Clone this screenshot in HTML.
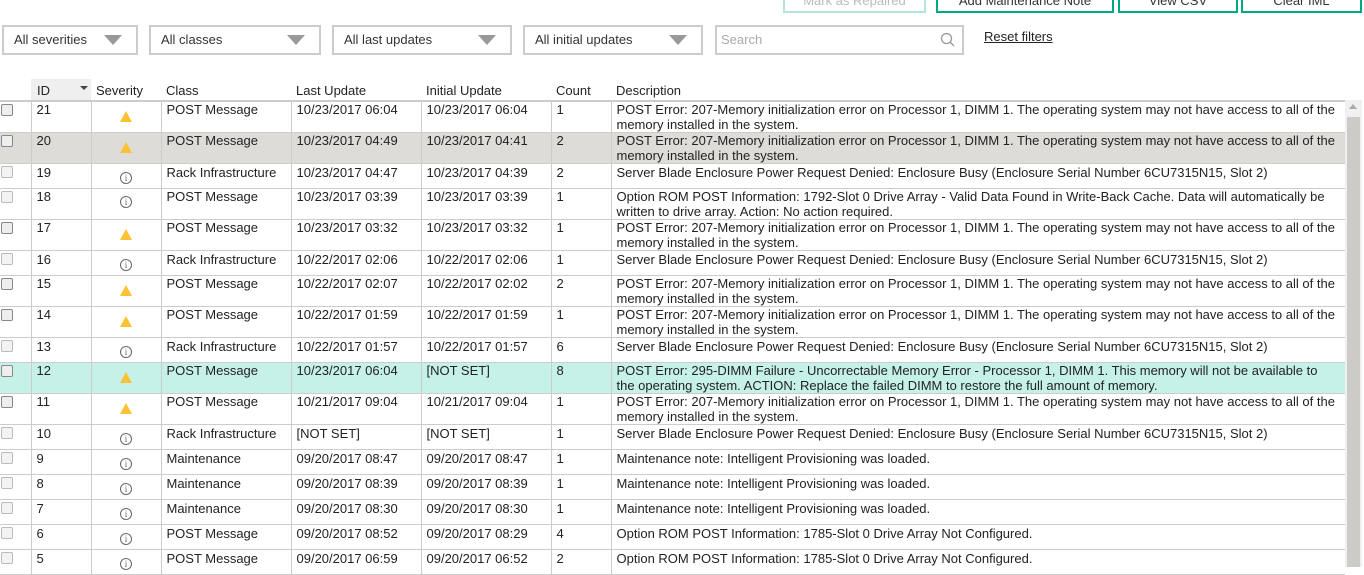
<!DOCTYPE html>
<html><head><meta charset="utf-8"><style>
*{box-sizing:border-box;margin:0;padding:0}
body{width:1364px;height:567px;overflow:hidden;background:#fff;font-family:"Liberation Sans",Arial,sans-serif;font-size:13px;color:#222;position:relative}
.btn{position:absolute;top:-20px;height:33px;border:2px solid #01a982;font-size:13px;text-align:center;line-height:38px;color:#333}
.sel{position:absolute;top:25px;height:30px;border:2px solid #ccc;padding-left:10px;line-height:26px;font-size:13px;color:#333}
.sel.dd:after{content:"";position:absolute;right:14px;top:8px;border-left:9px solid transparent;border-right:9px solid transparent;border-top:10px solid #999}
.reset{position:absolute;left:984px;top:29px;text-decoration:underline;color:#222}
.hdr{position:absolute;top:82px;height:18px;line-height:18px;color:#222}
table{position:absolute;left:0;top:100px;width:1345px;border-collapse:collapse;table-layout:fixed;border-top:2px solid #ccc}
td{border-left:1px solid #ccc;border-bottom:1px solid #ccc;vertical-align:top;padding:0 5px;line-height:15px;padding-top:1px;white-space:nowrap;overflow:hidden}
td:first-child{border-left:none;padding:0 0 0 1px}
td.d{white-space:normal;padding-right:9px}
tr.s1 td{height:25px}tr.s2 td{height:30px;padding-top:0}
tr.g td{background:#dedcd8}tr.t td{background:#c6f1e9}
.cb{display:block;width:12px;height:12px;border:1px solid #bbb;border-radius:2px;background:#f3f3f3;margin-top:2px}
.cb.on{border-color:#888;background:#eee}
.w{display:block;margin:9px auto 0;width:0;height:0;border-left:6px solid transparent;border-right:6px solid transparent;border-bottom:11px solid #fcc233}
.i{display:block;margin:7px auto 0;width:12px;height:12px;border:1px solid #666;border-radius:50%;font-size:9px;line-height:10px;text-align:center;color:#666;font-family:"Liberation Serif",serif;font-style:normal}
.sb{position:absolute;left:1345px;top:100px;width:17px;height:467px;background:#f0f0f0}
.th{position:absolute;left:1347px;top:117px;width:13px;height:450px;background:#cdcbc8}
</style></head><body>
<div class="btn" style="left:783px;width:143px;border-color:#b3e5d9;color:#bbb">Mark as Repaired</div>
<div class="btn" style="left:936px;width:178px">Add Maintenance Note</div>
<div class="btn" style="left:1118px;width:120px">View CSV</div>
<div class="btn" style="left:1241px;width:121px">Clear IML</div>
<div class="sel dd" style="left:2px;width:136px">All severities</div>
<div class="sel dd" style="left:149px;width:172px">All classes</div>
<div class="sel dd" style="left:332px;width:180px">All last updates</div>
<div class="sel dd" style="left:523px;width:180px">All initial updates</div>
<div class="sel" style="left:715px;width:249px;color:#aaa;padding-left:4px">Search<svg style="position:absolute;right:6px;top:5px" width="16" height="16" viewBox="0 0 16 16"><circle cx="6.5" cy="6.5" r="5" fill="none" stroke="#999" stroke-width="1.3"/><line x1="10" y1="10" x2="14" y2="14" stroke="#999" stroke-width="1.3"/></svg></div>
<div class="reset">Reset filters</div>
<div style="position:absolute;left:31px;top:79px;width:60px;height:21px;background:#efefef"></div>
<div class="hdr" style="left:37px">ID</div>
<div style="position:absolute;left:80px;top:86px;border-left:4px solid transparent;border-right:4px solid transparent;border-top:4px solid #444"></div>
<div class="hdr" style="left:96px">Severity</div>
<div class="hdr" style="left:166px">Class</div>
<div class="hdr" style="left:296px">Last Update</div>
<div class="hdr" style="left:426px">Initial Update</div>
<div class="hdr" style="left:556px">Count</div>
<div class="hdr" style="left:616px">Description</div>
<table>
<colgroup><col style="width:31px"><col style="width:60px"><col style="width:70px"><col style="width:130px"><col style="width:130px"><col style="width:130px"><col style="width:60px"><col></colgroup>
<tr class="s2"><td><i class="cb on"></i></td><td>21</td><td><i class="w"></i></td><td>POST Message</td><td>10/23/2017 06:04</td><td>10/23/2017 06:04</td><td>1</td><td class="d">POST Error: 207-Memory initialization error on Processor 1, DIMM 1. The operating system may not have access to all of the memory installed in the system.</td></tr>
<tr class="s2 g"><td><i class="cb on"></i></td><td>20</td><td><i class="w"></i></td><td>POST Message</td><td>10/23/2017 04:49</td><td>10/23/2017 04:41</td><td>2</td><td class="d">POST Error: 207-Memory initialization error on Processor 1, DIMM 1. The operating system may not have access to all of the memory installed in the system.</td></tr>
<tr class="s1"><td><i class="cb"></i></td><td>19</td><td><i class="i">i</i></td><td>Rack Infrastructure</td><td>10/23/2017 04:47</td><td>10/23/2017 04:39</td><td>2</td><td class="d">Server Blade Enclosure Power Request Denied: Enclosure Busy (Enclosure Serial Number 6CU7315N15, Slot 2)</td></tr>
<tr class="s2"><td><i class="cb"></i></td><td>18</td><td><i class="i">i</i></td><td>POST Message</td><td>10/23/2017 03:39</td><td>10/23/2017 03:39</td><td>1</td><td class="d">Option ROM POST Information: 1792-Slot 0 Drive Array - Valid Data Found in Write-Back Cache. Data will automatically be written to drive array. Action: No action required.</td></tr>
<tr class="s2"><td><i class="cb on"></i></td><td>17</td><td><i class="w"></i></td><td>POST Message</td><td>10/23/2017 03:32</td><td>10/23/2017 03:32</td><td>1</td><td class="d">POST Error: 207-Memory initialization error on Processor 1, DIMM 1. The operating system may not have access to all of the memory installed in the system.</td></tr>
<tr class="s1"><td><i class="cb"></i></td><td>16</td><td><i class="i">i</i></td><td>Rack Infrastructure</td><td>10/22/2017 02:06</td><td>10/22/2017 02:06</td><td>1</td><td class="d">Server Blade Enclosure Power Request Denied: Enclosure Busy (Enclosure Serial Number 6CU7315N15, Slot 2)</td></tr>
<tr class="s2"><td><i class="cb on"></i></td><td>15</td><td><i class="w"></i></td><td>POST Message</td><td>10/22/2017 02:07</td><td>10/22/2017 02:02</td><td>2</td><td class="d">POST Error: 207-Memory initialization error on Processor 1, DIMM 1. The operating system may not have access to all of the memory installed in the system.</td></tr>
<tr class="s2"><td><i class="cb on"></i></td><td>14</td><td><i class="w"></i></td><td>POST Message</td><td>10/22/2017 01:59</td><td>10/22/2017 01:59</td><td>1</td><td class="d">POST Error: 207-Memory initialization error on Processor 1, DIMM 1. The operating system may not have access to all of the memory installed in the system.</td></tr>
<tr class="s1"><td><i class="cb"></i></td><td>13</td><td><i class="i">i</i></td><td>Rack Infrastructure</td><td>10/22/2017 01:57</td><td>10/22/2017 01:57</td><td>6</td><td class="d">Server Blade Enclosure Power Request Denied: Enclosure Busy (Enclosure Serial Number 6CU7315N15, Slot 2)</td></tr>
<tr class="s2 t"><td><i class="cb on"></i></td><td>12</td><td><i class="w"></i></td><td>POST Message</td><td>10/23/2017 06:04</td><td>[NOT SET]</td><td>8</td><td class="d">POST Error: 295-DIMM Failure - Uncorrectable Memory Error - Processor 1, DIMM 1. This memory will not be available to the operating system. ACTION: Replace the failed DIMM to restore the full amount of memory.</td></tr>
<tr class="s2"><td><i class="cb on"></i></td><td>11</td><td><i class="w"></i></td><td>POST Message</td><td>10/21/2017 09:04</td><td>10/21/2017 09:04</td><td>1</td><td class="d">POST Error: 207-Memory initialization error on Processor 1, DIMM 1. The operating system may not have access to all of the memory installed in the system.</td></tr>
<tr class="s1"><td><i class="cb"></i></td><td>10</td><td><i class="i">i</i></td><td>Rack Infrastructure</td><td>[NOT SET]</td><td>[NOT SET]</td><td>1</td><td class="d">Server Blade Enclosure Power Request Denied: Enclosure Busy (Enclosure Serial Number 6CU7315N15, Slot 2)</td></tr>
<tr class="s1"><td><i class="cb"></i></td><td>9</td><td><i class="i">i</i></td><td>Maintenance</td><td>09/20/2017 08:47</td><td>09/20/2017 08:47</td><td>1</td><td class="d">Maintenance note: Intelligent Provisioning was loaded.</td></tr>
<tr class="s1"><td><i class="cb"></i></td><td>8</td><td><i class="i">i</i></td><td>Maintenance</td><td>09/20/2017 08:39</td><td>09/20/2017 08:39</td><td>1</td><td class="d">Maintenance note: Intelligent Provisioning was loaded.</td></tr>
<tr class="s1"><td><i class="cb"></i></td><td>7</td><td><i class="i">i</i></td><td>Maintenance</td><td>09/20/2017 08:30</td><td>09/20/2017 08:30</td><td>1</td><td class="d">Maintenance note: Intelligent Provisioning was loaded.</td></tr>
<tr class="s1"><td><i class="cb"></i></td><td>6</td><td><i class="i">i</i></td><td>POST Message</td><td>09/20/2017 08:52</td><td>09/20/2017 08:29</td><td>4</td><td class="d">Option ROM POST Information: 1785-Slot 0 Drive Array Not Configured.</td></tr>
<tr class="s1"><td><i class="cb"></i></td><td>5</td><td><i class="i">i</i></td><td>POST Message</td><td>09/20/2017 06:59</td><td>09/20/2017 06:52</td><td>2</td><td class="d">Option ROM POST Information: 1785-Slot 0 Drive Array Not Configured.</td></tr>
</table>
<div class="sb"></div><div class="th"></div>
<div style="position:absolute;left:1349px;top:104px;border-left:4px solid transparent;border-right:4px solid transparent;border-bottom:5px solid #aaa"></div>
</body></html>
